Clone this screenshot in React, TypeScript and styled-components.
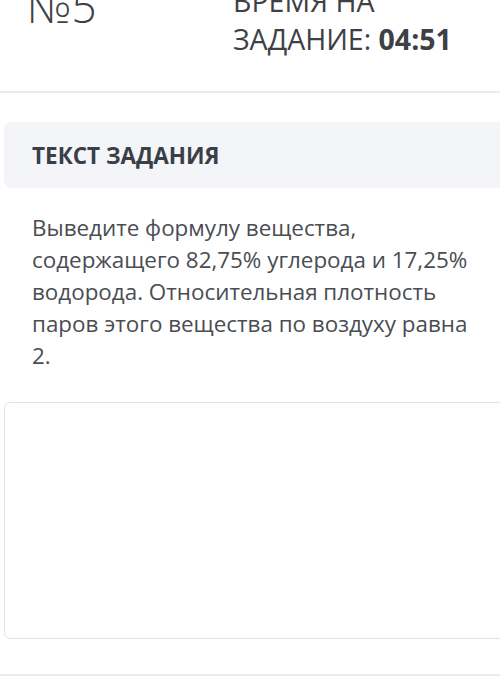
import React from "react";
import styled, { createGlobalStyle } from "styled-components";

const GlobalStyle = createGlobalStyle`
  html, body {
    margin: 0;
    padding: 0;
    background: #ffffff;
    overflow: hidden;
  }
  body {
    font-family: "Open Sans", "Noto Sans", sans-serif;
    color: #44484d;
  }
`;

const Page = styled.div`
  width: 500px;
  height: 693px;
  overflow: hidden;
`;

const Header = styled.header`
  display: flex;
  align-items: flex-start;
  margin-top: -18px;
  height: 109px;
  border-bottom: 2px solid #ececec;
`;

const TaskNumber = styled.div`
  width: 206px;
  padding-left: 27px;
  margin-top: 2px;
  font-size: 44px;
  font-weight: 300;
  line-height: 1;
  color: #3d4146;
`;

const Timer = styled.div`
  font-size: 28.5px;
  font-weight: 400;
  line-height: 38px;
  color: #3d4146;
  text-transform: uppercase;
`;

const TimerValue = styled.b`
  font-weight: 700;
`;

const Section = styled.section`
  padding: 29px 0 0 4px;
`;

const SectionTitle = styled.div`
  display: flex;
  align-items: center;
  height: 66px;
  margin-right: -20px;
  padding-left: 28px;
  border-radius: 8px;
  background: #f4f5f8;
  font-size: 22.5px;
  font-weight: 700;
  color: #3a3e46;
`;

const TaskText = styled.p`
  margin: 24px 0 0;
  padding: 0 10px 0 28px;
  font-size: 22.4px;
  line-height: 32px;
  color: #4a4d52;
`;

const AnswerBox = styled.textarea`
  display: block;
  box-sizing: border-box;
  width: calc(100% + 20px);
  height: 237px;
  margin-top: 30px;
  border: 1.5px solid #e2e3e5;
  border-radius: 6px;
  resize: none;
  outline: none;
  background: #ffffff;
`;

const Footer = styled.div`
  margin-top: 35px;
  border-top: 2px solid #ececec;
`;

export default function App() {
  return (
    <Page>
      <GlobalStyle />
      <Header>
        <TaskNumber>№5</TaskNumber>
        <Timer>
          Время на
          <br />
          задание: <TimerValue>04:51</TimerValue>
        </Timer>
      </Header>
      <Section>
        <SectionTitle>ТЕКСТ ЗАДАНИЯ</SectionTitle>
        <TaskText>
          Выведите формулу вещества, содержащего 82,75% углерода и 17,25%
          водорода. Относительная плотность паров этого вещества по воздуху
          равна 2.
        </TaskText>
        <AnswerBox />
      </Section>
      <Footer />
    </Page>
  );
}
